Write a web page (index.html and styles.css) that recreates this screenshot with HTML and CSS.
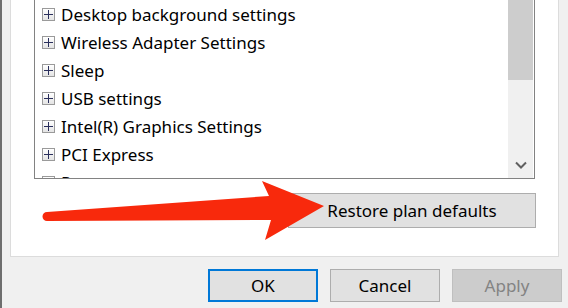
FILE: index.html
```html
<!DOCTYPE html>
<html lang="en">
<head>
  <meta charset="UTF-8">
  <title>Power Options - Advanced settings</title>
  <link rel="stylesheet" href="styles.css">
</head>
<body>
  <div class="panel">
    <div class="listbox">
      <ul class="items">
        <li><span class="plus"></span>Desktop background settings</li>
        <li><span class="plus"></span>Wireless Adapter Settings</li>
        <li><span class="plus"></span>Sleep</li>
        <li><span class="plus"></span>USB settings</li>
        <li><span class="plus"></span>Intel(R) Graphics Settings</li>
        <li><span class="plus"></span>PCI Express</li>
        <li><span class="plus"></span>Processor power management</li>
      </ul>
      <div class="scrollbar">
        <div class="thumb"></div>
        <div class="track">
          <svg class="chevron" width="12" height="8" viewBox="0 0 12 8">
            <path d="M1 1.5 L6 6.5 L11 1.5" fill="none" stroke="#606060" stroke-width="2"/>
          </svg>
        </div>
      </div>
    </div>
    <div class="restore-row">
      <button class="btn restore">Restore plan defaults</button>
    </div>
  </div>

  <div class="footer">
    <button class="btn default">OK</button>
    <button class="btn">Cancel</button>
    <button class="btn disabled">Apply</button>
  </div>

  <svg class="arrow" width="568" height="308" viewBox="0 0 568 308">
    <path d="M47 212 L269 196 L262 181 L324 206 L265 240 L271 220 L47 221 A4.5 4.5 0 0 1 47 212 Z" fill="#f8290c"/>
  </svg>
</body>
</html>
```

FILE: styles.css
```css
body {
  margin: 0;
  height: 308px;
  overflow: hidden;
  background: #f0f0f0;
  border-left: 2px solid #6e6e6e;
  font-family: 'Noto Sans', sans-serif;
  color: #000;
  position: relative;
}

.panel {
  margin: -12px 0 0 8px;
  width: 549px;
  background: #fff;
  border: 1px solid #dcdcdc;
  padding: 0 23px 28px 23px;
  box-sizing: border-box;
}

.listbox {
  display: flex;
  height: 190px;
  border: 1px solid #828282;
  background: #fff;
  box-sizing: border-box;
}

.items {
  flex: 1;
  list-style: none;
  margin: 0;
  padding: 10px 0 0 7px;
  overflow: hidden;
}

.items li {
  display: flex;
  align-items: center;
  height: 28px;
  font-size: 17px;
  white-space: nowrap;
}

.plus {
  position: relative;
  width: 11px;
  height: 11px;
  border: 1px solid #9a9a9a;
  background: linear-gradient(#ffffff, #e4e4e4);
  margin-right: 6px;
  flex-shrink: 0;
}

.plus::before,
.plus::after {
  content: "";
  position: absolute;
  background: #2a2f5c;
}

.plus::before {
  left: 1px;
  right: 1px;
  top: 5px;
  height: 1px;
}

.plus::after {
  top: 1px;
  bottom: 1px;
  left: 5px;
  width: 1px;
}

.scrollbar {
  width: 25px;
  margin-right: 1px;
  display: flex;
  flex-direction: column;
}

.thumb {
  height: 90px;
  background: #cdcdcd;
}

.track {
  flex: 1;
  background: #f0f0f0;
  display: flex;
  align-items: flex-end;
  justify-content: center;
  padding-bottom: 9px;
}

.restore-row {
  display: flex;
  justify-content: flex-end;
  margin-top: 14px;
  margin-right: -1px;
}

.btn {
  font-family: 'Noto Sans', sans-serif;
  font-size: 17px;
  color: #000;
  background: #e1e1e1;
  border: 1px solid #adadad;
  padding: 0;
  box-sizing: border-box;
}

.restore {
  width: 248px;
  height: 35px;
}

.footer {
  display: flex;
  justify-content: flex-end;
  gap: 12px;
  margin-top: 12px;
  padding-right: 6px;
}

.footer .btn {
  width: 110px;
  height: 33px;
}

.footer .default {
  border: 2px solid #0078d7;
}

.footer .disabled {
  background: #cccccc;
  border-color: #bfbfbf;
  color: #838383;
}

.arrow {
  position: absolute;
  top: 0;
  left: -2px;
  pointer-events: none;
}
```
